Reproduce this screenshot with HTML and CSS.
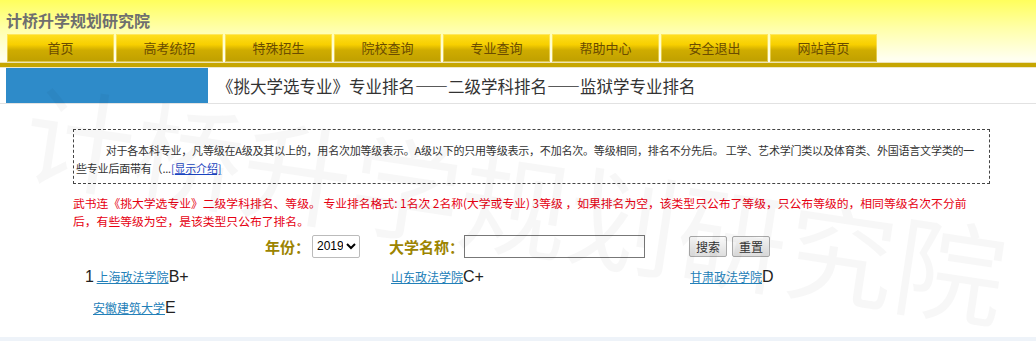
FILE: index.html
```html
<!DOCTYPE html>
<html lang="zh-CN">
<head>
    <meta charset="UTF-8">
    <title>计桥升学规划研究院</title>
    <link rel="stylesheet" href="styles.css">
</head>
<body>
    <!-- Header -->
    <div class="header">
        <div class="logo">计桥升学规划研究院</div>
        <div class="menu">
            <a href="#">首页</a>
            <a href="#">高考统招</a>
            <a href="#">特殊招生</a>
            <a href="#">院校查询</a>
            <a href="#">专业查询</a>
            <a href="#">帮助中心</a>
            <a href="#">安全退出</a>
            <a href="#">网站首页</a>
        </div>
    </div>
    <div class="goldline"></div>

    <!-- Title -->
    <div class="titlebar">
        <div class="titlebar-block"></div>
        <h2>《挑大学选专业》专业排名——二级学科排名——监狱学专业排名</h2>
    </div>

    <!-- Main -->
    <div class="main">
        <div class="intro">
            <p>对于各本科专业，凡等级在A级及其以上的，用名次加等级表示。A级以下的只用等级表示，不加名次。等级相同，排名不分先后。 工学、艺术学门类以及体育类、外国语言文学类的一些专业后面带有（...<a href="#">[显示介绍]</a></p>
        </div>
        <p class="note">武书连《挑大学选专业》二级学科排名、等级。 专业排名格式: 1名次 2名称(大学或专业) 3等级 ，如果排名为空，该类型只公布了等级，只公布等级的，相同等级名次不分前后，有些等级为空，是该类型只公布了排名。</p>

        <form class="search">
            <label>年份：</label>
            <select class="year">
                <option>2019</option>
            </select>
            <label class="school-label">大学名称：</label>
            <input type="text" class="school">
            <div class="buttons">
                <button type="button">搜索</button>
                <button type="button">重置</button>
            </div>
        </form>

        <div class="results">
            <div class="item"><span class="rank">1</span> <a href="#">上海政法学院</a><span class="grade">B+</span></div>
            <div class="item"><a href="#">山东政法学院</a><span class="grade">C+</span></div>
            <div class="item"><a href="#">甘肃政法学院</a><span class="grade">D</span></div>
            <div class="item item-norank"><a href="#">安徽建筑大学</a><span class="grade">E</span></div>
        </div>
    </div>

    <div class="watermark">计桥升学规划研究院</div>
    <div class="footer-line"></div>
</body>
</html>
```

FILE: styles.css
```css
body {
    margin: 0;
    padding: 0;
    font-family: "Noto Sans CJK SC", "Liberation Sans", sans-serif;
    font-size: 12px;
    color: #333;
    background-color: #fff;
    position: relative;
    height: 341px;
    overflow: hidden;
}

/* Header */
.header {
    background: linear-gradient(#ffff5c 0%, #ffffa8 45%, #fffff0 95%);
    padding: 0 7px;
    height: 62px;
}
.logo {
    height: 34px;
    padding-top: 6px;
    box-sizing: border-box;
    line-height: 28px;
    margin-left: -1px;
    font-size: 16px;
    font-weight: bold;
    color: #6f6f6f;
}
.menu {
    display: flex;
    height: 28px;
}
.menu a {
    width: 107px;
    margin-right: 2px;
    text-align: center;
    line-height: 28px;
    font-size: 13px;
    color: #6a4c00;
    text-decoration: none;
    background: linear-gradient(#ffe020 0%, #f7cf00 38%, #cfac00 58%, #bf9f00 100%);
    box-shadow: inset 0 0 0 1px rgba(255, 240, 150, 0.5);
}
.goldline {
    height: 4px;
    background-color: #c6a600;
    border-top: 1px solid #ece3b5;
    border-bottom: 1px solid #efe8c8;
}

/* Title */
.titlebar {
    display: flex;
    align-items: center;
    height: 35px;
    border-bottom: 1px solid #e2e2e2;
}
.titlebar-block {
    width: 202px;
    height: 35px;
    margin-left: 6px;
    background-color: #2e8bc9;
}
.titlebar h2 {
    margin: 0 0 0 9px;
    font-size: 16.5px;
    font-weight: normal;
    color: #333;
}

/* Main */
.main {
    margin: 0 46px 0 73px;
}
.intro {
    margin-top: 25px;
    border: 1px dashed #444;
    height: 42px;
    padding: 11px 14px 0 2px;
}
.intro p {
    margin: 0;
    text-indent: 2.7em;
    line-height: 18px;
    font-size: 11px;
    letter-spacing: -0.2px;
    color: #333;
}
.intro a {
    color: #1a44c0;
}
.note {
    margin: 10px 22px 0 0;
    line-height: 18px;
    font-size: 11.8px;
    color: #e60012;
}

/* Search */
.search {
    display: flex;
    align-items: center;
    height: 26px;
    margin-top: 3px;
    margin-left: 192px;
    font-size: 15px;
}
.search label {
    font-weight: bold;
    color: #9c8400;
}
.year {
    margin-left: 2px;
    height: 23px;
    width: 48px;
    font-size: 12px;
    font-family: "Liberation Sans", sans-serif;
    border: 1px solid #bbb;
    border-radius: 2px;
    background-color: #fff;
}
.school-label {
    margin-left: 29px;
}
.school {
    width: 177px;
    height: 19px;
    border: 1px solid #777;
    padding: 1px;
}
.buttons {
    display: flex;
    gap: 5px;
    margin-left: 44px;
}
.buttons button {
    height: 21px;
    padding: 0 6px;
    font-family: "Noto Sans CJK SC", sans-serif;
    font-size: 12px;
    color: #333;
    background: linear-gradient(#fafafa, #dedede);
    border: 1px solid #aaa;
    border-radius: 2px;
}

/* Results */
.results {
    display: grid;
    grid-template-columns: 306px 299px 300px;
    margin: 2px 0 0 12px;
}
.item {
    height: 31px;
    line-height: 31px;
}
.item-norank {
    padding-left: 8px;
}
.rank,
.grade {
    font-family: "Liberation Sans", sans-serif;
    font-size: 16px;
    color: #222;
}
.item a {
    font-size: 12px;
    color: #2380b8;
}

/* Watermark */
.watermark {
    position: absolute;
    left: 38px;
    top: 48px;
    font-size: 110px;
    color: rgba(0, 0, 0, 0.03);
    white-space: nowrap;
    transform: rotate(8.5deg);
    transform-origin: left top;
    pointer-events: none;
}
.footer-line {
    position: absolute;
    left: 0;
    right: 0;
    bottom: 0;
    height: 4px;
    background-color: #eef3f9;
}
```
